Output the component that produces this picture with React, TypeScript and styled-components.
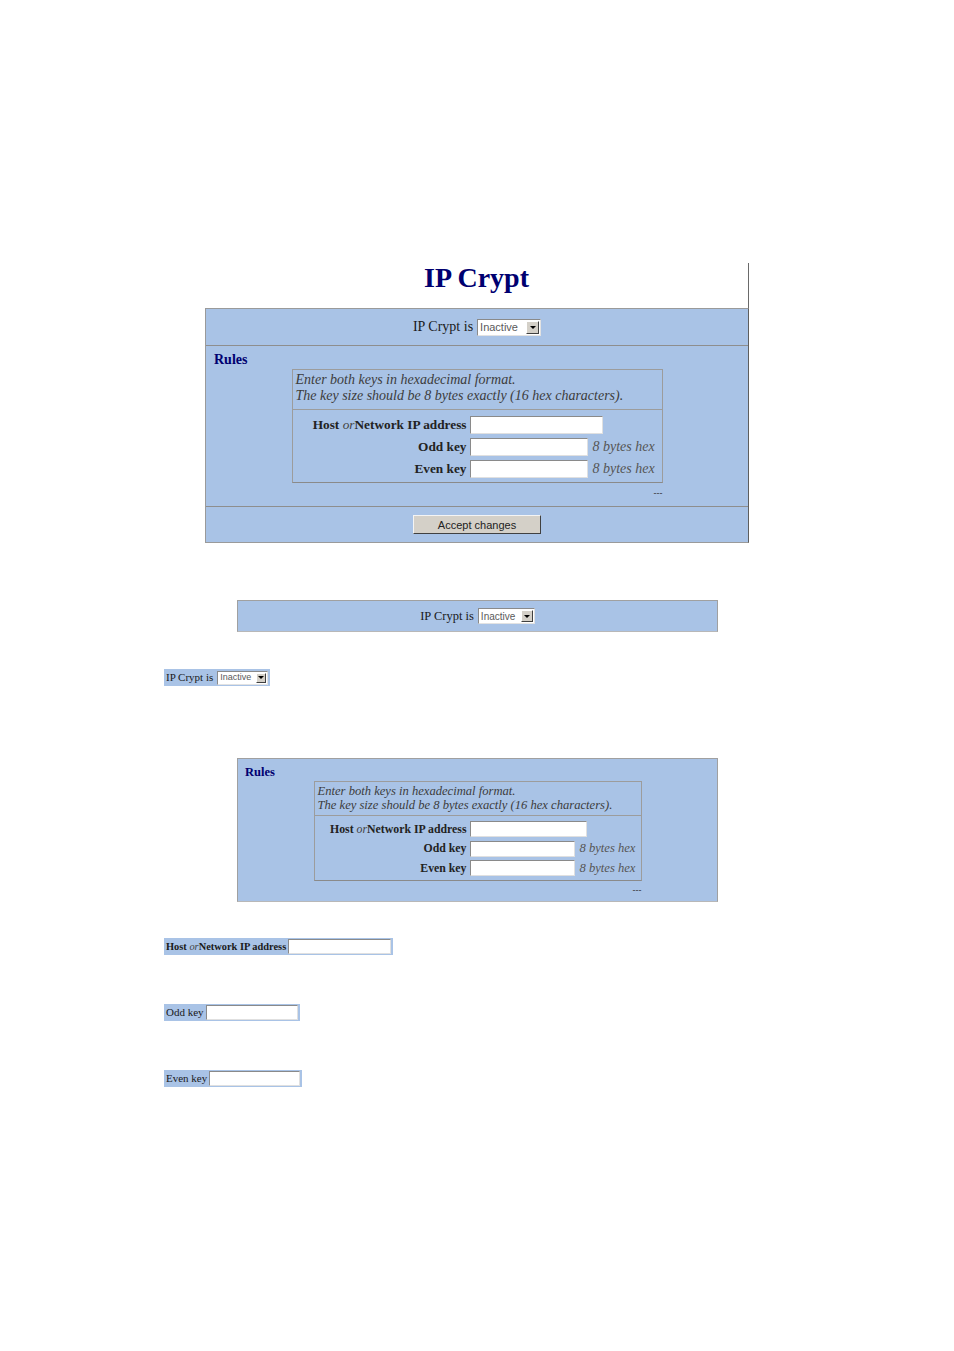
import React from 'react';
import styled, { createGlobalStyle } from 'styled-components';

const GlobalStyle = createGlobalStyle`
  html, body {
    margin: 0;
    padding: 0;
    background: #ffffff;
  }
  body {
    font-family: "Liberation Serif", "Times New Roman", serif;
  }
`;

const BLUE = '#a9c3e6';
const NAVY = '#000070';

type Size = 'lg' | 'sm';

const sizes = {
  lg: { label: 14, text: 14, line: 16, notePad: 5, field: 13.3, inputH: 18, hostW: 133, keyW: 118, pitch: 22, boxW: 371, hint: 66, fieldPad: 4, dash: 4, padX: 8, padBottom: 7 },
  sm: { label: 12.5, text: 12.6, line: 14, notePad: 3, field: 11.8, inputH: 16, hostW: 117, keyW: 105, pitch: 19.5, boxW: 328, hint: 58, fieldPad: 4, dash: 3, padX: 7, padBottom: 5 },
};

const selectSizes = {
  lg: { w: 64, h: 17, font: 11, text: 14 },
  md: { w: 57, h: 16, font: 10, text: 12.5 },
  xs: { w: 51, h: 14, font: 9, text: 11 },
};

type SelectSize = keyof typeof selectSizes;

const Page = styled.div`
  width: 954px;
  min-height: 1351px;
  padding-top: 263px;
  box-sizing: border-box;
`;

const Block = styled.div<{ $left: number; $top?: number; $width?: number }>`
  display: flex;
  margin: ${(p) => p.$top ?? 0}px 0 0 ${(p) => p.$left}px;
  width: ${(p) => (p.$width ? `${p.$width}px` : 'auto')};
  box-sizing: border-box;
`;

const Column = styled.div`
  flex: 1;
`;

const TitleBar = styled.div`
  height: 45px;
  border-right: 1px solid #6a6a6a;
  text-align: center;
`;

const Title = styled.h1`
  margin: 0;
  font-family: "Liberation Serif", "Times New Roman", serif;
  font-size: 28px;
  line-height: 29px;
  font-weight: bold;
  color: ${NAVY};
`;

const Panel = styled.div`
  background: ${BLUE};
  border: 1px solid #9a9a9a;
  border-right-color: #5e5e5e;
`;

const HeaderRow = styled.div<{ $height: number; $size: number }>`
  height: ${(p) => p.$height}px;
  display: flex;
  align-items: center;
  justify-content: center;
  gap: 4px;
  font-size: ${(p) => p.$size}px;
  color: #1a1a1a;
`;

const Divider = styled.div`
  height: 1px;
  background: #8e8e8e;
`;

const Strip = styled.div`
  flex: 1;
  background: ${BLUE};
  border: 1px solid #a0a0a0;
  border-bottom-color: #b8b8b8;
`;

const InlineStrip = styled.div<{ $size: number }>`
  display: flex;
  align-items: center;
  gap: 2px;
  padding: 1px 2px;
  background: ${BLUE};
  font-size: ${(p) => p.$size}px;
  line-height: 15px;
  color: #1a1a1a;
`;

const SelectBox = styled.div<{ $size: SelectSize }>`
  width: ${(p) => selectSizes[p.$size].w}px;
  height: ${(p) => selectSizes[p.$size].h}px;
  box-sizing: border-box;
  display: flex;
  align-items: center;
  background: #ffffff;
  border: 1px solid #8a8a8a;
  border-right-color: #e2e2e2;
  border-bottom-color: #e2e2e2;
`;

const SelectText = styled.span<{ $size: SelectSize }>`
  flex: 1;
  padding-left: 2px;
  font-family: "Liberation Sans", Arial, sans-serif;
  font-size: ${(p) => selectSizes[p.$size].font}px;
  color: #5a5a5a;
  white-space: nowrap;
  overflow: hidden;
`;

const SelectButton = styled.span<{ $size: SelectSize }>`
  width: ${(p) => selectSizes[p.$size].h - 4}px;
  height: ${(p) => selectSizes[p.$size].h - 4}px;
  margin-right: 1px;
  box-sizing: border-box;
  display: flex;
  align-items: center;
  justify-content: center;
  background: #d4d0c8;
  border: 1px solid #ffffff;
  border-right-color: #404040;
  border-bottom-color: #404040;
`;

const Arrow = styled.span`
  width: 0;
  height: 0;
  border-left: 3px solid transparent;
  border-right: 3px solid transparent;
  border-top: 3px solid #000000;
`;

const RulesSection = styled.div<{ $size: Size }>`
  padding: 6px ${(p) => sizes[p.$size].padX}px ${(p) => sizes[p.$size].padBottom}px;
`;

const RulesLabel = styled.div<{ $size: Size }>`
  font-size: ${(p) => sizes[p.$size].label}px;
  line-height: ${(p) => sizes[p.$size].label + 2}px;
  font-weight: bold;
  color: ${NAVY};
`;

const RulesBody = styled.div<{ $size: Size }>`
  width: ${(p) => sizes[p.$size].boxW}px;
  margin: 1px auto 0;
`;

const RulesBox = styled.div`
  border: 1px solid #9c9c9c;
  border-bottom-color: #8a8a8a;
`;

const Note = styled.div<{ $size: Size }>`
  padding: 2px 3px ${(p) => sizes[p.$size].notePad}px;
  font-size: ${(p) => sizes[p.$size].text}px;
  line-height: ${(p) => sizes[p.$size].line}px;
  font-style: italic;
  color: #3c3c3c;
  border-bottom: 1px solid #9c9c9c;
`;

const Fields = styled.div<{ $size: Size }>`
  display: grid;
  grid-template-columns: 1fr ${(p) => sizes[p.$size].keyW}px ${(p) => sizes[p.$size].hint}px;
  grid-auto-rows: ${(p) => sizes[p.$size].pitch}px;
  align-items: center;
  column-gap: 3px;
  padding: ${(p) => sizes[p.$size].fieldPad}px 5px 2px 0;
`;

const FieldLabel = styled.label<{ $size: Size }>`
  text-align: right;
  font-size: ${(p) => sizes[p.$size].field}px;
  font-weight: bold;
  color: #222222;
  white-space: nowrap;
`;

const Or = styled.i`
  font-weight: normal;
  color: #444444;
`;

const TextInput = styled.input<{ $width: number; $height: number; $wide?: boolean }>`
  width: ${(p) => p.$width}px;
  height: ${(p) => p.$height}px;
  box-sizing: border-box;
  margin: 0;
  padding: 0;
  background: #ffffff;
  border: 1px solid #8a8a8a;
  border-right-color: #e0e0e0;
  border-bottom-color: #e0e0e0;
  grid-column: ${(p) => (p.$wide ? '2 / span 2' : 'auto')};
  outline: none;
`;

const Hint = styled.span<{ $size: Size }>`
  padding-left: 2px;
  font-size: ${(p) => sizes[p.$size].text}px;
  font-style: italic;
  color: #555555;
  white-space: nowrap;
`;

const Ellipsis = styled.div<{ $size: Size }>`
  margin-top: ${(p) => sizes[p.$size].dash}px;
  text-align: right;
  font-family: "Liberation Sans", Arial, sans-serif;
  font-size: 9px;
  line-height: 12px;
  color: #333333;
`;

const ButtonRow = styled.div`
  height: 35px;
  display: flex;
  align-items: center;
  justify-content: center;
`;

const Button = styled.button`
  width: 128px;
  height: 19px;
  padding: 0;
  background: #d4d0c8;
  border: 1px solid #f4f4f4;
  border-right-color: #404040;
  border-bottom-color: #404040;
  font-family: "Liberation Sans", Arial, sans-serif;
  font-size: 11px;
  color: #222222;
`;

const StripLabel = styled.b`
  white-space: nowrap;
`;

const Select = ({ size }: { size: SelectSize }) => (
  <SelectBox $size={size}>
    <SelectText $size={size}>Inactive</SelectText>
    <SelectButton $size={size}>
      <Arrow />
    </SelectButton>
  </SelectBox>
);

const StatusRow = ({ height, size }: { height: number; size: SelectSize }) => (
  <HeaderRow $height={height} $size={selectSizes[size].text}>
    <span>IP Crypt is</span>
    <Select size={size} />
  </HeaderRow>
);

const Rules = ({ size }: { size: Size }) => {
  const s = sizes[size];
  return (
    <RulesSection $size={size}>
      <RulesLabel $size={size}>Rules</RulesLabel>
      <RulesBody $size={size}>
        <RulesBox>
          <Note $size={size}>
            Enter both keys in hexadecimal format.
            <br />
            The key size should be 8 bytes exactly (16 hex characters).
          </Note>
          <Fields $size={size}>
            <FieldLabel $size={size}>
              Host <Or>or</Or>Network IP address
            </FieldLabel>
            <TextInput $width={s.hostW} $height={s.inputH} $wide />
            <FieldLabel $size={size}>Odd key</FieldLabel>
            <TextInput $width={s.keyW} $height={s.inputH} />
            <Hint $size={size}>8 bytes hex</Hint>
            <FieldLabel $size={size}>Even key</FieldLabel>
            <TextInput $width={s.keyW} $height={s.inputH} />
            <Hint $size={size}>8 bytes hex</Hint>
          </Fields>
        </RulesBox>
        <Ellipsis $size={size}>---</Ellipsis>
      </RulesBody>
    </RulesSection>
  );
};

const App = () => (
  <>
    <GlobalStyle />
    <Page>
      <Block $left={205} $width={544}>
        <Column>
          <TitleBar>
            <Title>IP Crypt</Title>
          </TitleBar>
          <Panel>
            <StatusRow height={36} size="lg" />
            <Divider />
            <Rules size="lg" />
            <Divider />
            <ButtonRow>
              <Button>Accept changes</Button>
            </ButtonRow>
          </Panel>
        </Column>
      </Block>

      <Block $left={237} $top={57} $width={481}>
        <Strip>
          <StatusRow height={30} size="md" />
        </Strip>
      </Block>

      <Block $left={164} $top={37}>
        <InlineStrip $size={11}>
          <StatusRow height={15} size="xs" />
        </InlineStrip>
      </Block>

      <Block $left={237} $top={72} $width={481}>
        <Strip>
          <Rules size="sm" />
        </Strip>
      </Block>

      <Block $left={164} $top={36}>
        <InlineStrip $size={10.4}>
          <StripLabel>
            Host <Or>or</Or>Network IP address
          </StripLabel>
          <TextInput $width={103} $height={15} />
        </InlineStrip>
      </Block>

      <Block $left={164} $top={49}>
        <InlineStrip $size={11}>
          <span>Odd key</span>
          <TextInput $width={92} $height={15} />
        </InlineStrip>
      </Block>

      <Block $left={164} $top={49}>
        <InlineStrip $size={11}>
          <span>Even key</span>
          <TextInput $width={91} $height={15} />
        </InlineStrip>
      </Block>
    </Page>
  </>
);

export default App;
